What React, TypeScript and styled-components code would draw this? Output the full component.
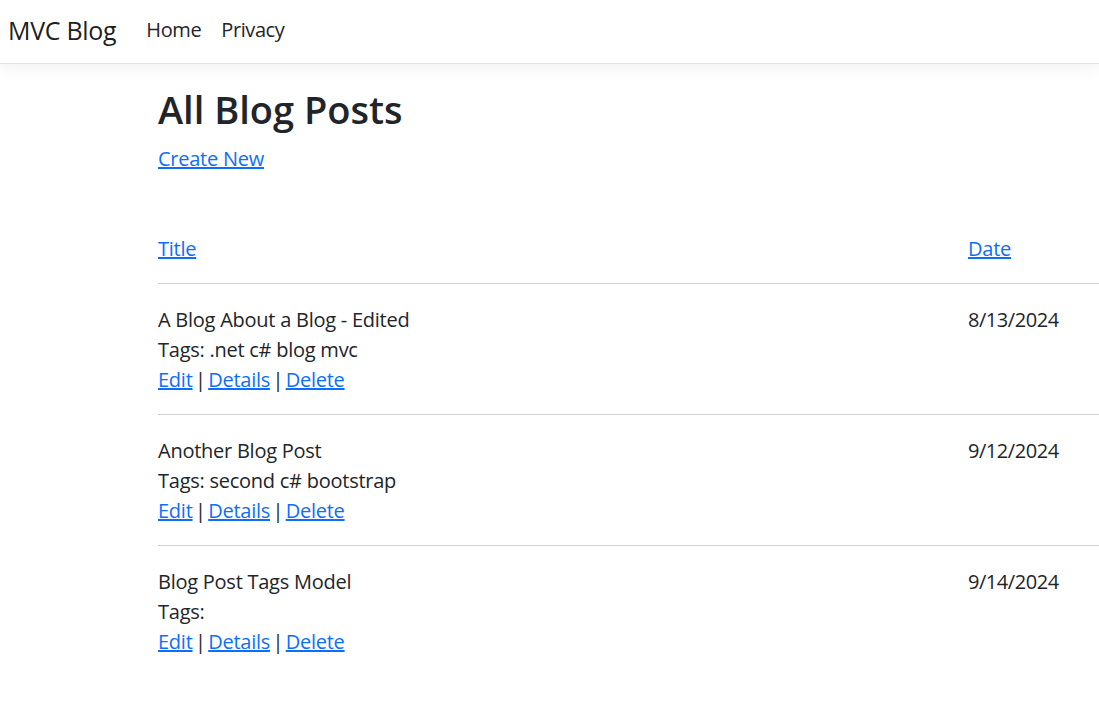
import React from "react";
import styled, { createGlobalStyle } from "styled-components";

const Global = createGlobalStyle`
  html, body { margin: 0; padding: 0; background: #fff; }
  body {
    font-family: "Open Sans", "Noto Sans", "Liberation Sans", sans-serif;
    font-size: 20px;
    line-height: 30px;
    letter-spacing: -0.25px;
    color: #212529;
  }
  * { box-sizing: border-box; }
`;

const Navbar = styled.header`
  height: 64px;
  border-bottom: 1px solid #dee2e6;
  box-shadow: 0 5px 15px rgba(0, 0, 0, 0.05);
  display: flex;
  align-items: center;
  padding: 0 0 3px 8px;
  background: #fff;
`;

const Brand = styled.a`
  font-size: 25px;
  color: rgba(0, 0, 0, 0.9);
  text-decoration: none;
  margin-right: 20px;
  line-height: 36px;
  letter-spacing: -0.3px;
`;

const NavList = styled.nav`
  display: flex;
`;

const NavLink = styled.a`
  color: #212529;
  text-decoration: none;
  padding: 0 10px;
  letter-spacing: -0.4px;
`;

const Main = styled.main`
  padding: 22px 0 0 158px;
`;

const Heading = styled.h1`
  font-size: 38px;
  line-height: 46px;
  font-weight: 600;
  letter-spacing: 0;
  margin: 0 0 12px;
`;

const Link = styled.a`
  color: #0d6efd;
  text-decoration: underline;
`;

const Para = styled.p`
  margin: 0;
`;

const Table = styled.table`
  width: 100%;
  border-collapse: collapse;
  margin-top: 39px;
`;

const Th = styled.th<{ $w?: number }>`
  text-align: left;
  font-weight: 400;
  padding: 21px 0 19px;
  border-bottom: 1px solid #cfcfcf;
  width: ${(p) => (p.$w ? `${p.$w}px` : "auto")};
`;

const Row = styled.tr`
  & + & td { border-top: 1px solid #cfcfcf; }
`;

const Td = styled.td`
  padding: 21px 0 19px;
  vertical-align: top;
`;

const DateCell = styled(Td)`
  letter-spacing: -0.45px;
`;

const Sep = styled.span`
  color: #212529;
  margin: 0 -2.5px;
`;

const posts = [
  { title: "A Blog About a Blog - Edited", tags: ".net c# blog mvc", date: "8/13/2024" },
  { title: "Another Blog Post", tags: "second c# bootstrap", date: "9/12/2024" },
  { title: "Blog Post Tags Model", tags: "", date: "9/14/2024" },
];

export default function App() {
  return (
    <>
      <Global />
      <Navbar>
        <Brand href="#">MVC Blog</Brand>
        <NavList>
          <NavLink href="#">Home</NavLink>
          <NavLink href="#">Privacy</NavLink>
        </NavList>
      </Navbar>
      <Main>
        <Heading>All Blog Posts</Heading>
        <Para>
          <Link href="#">Create New</Link>
        </Para>
        <Table>
          <thead>
            <tr>
              <Th $w={810}>
                <Link href="#">Title</Link>
              </Th>
              <Th>
                <Link href="#">Date</Link>
              </Th>
            </tr>
          </thead>
          <tbody>
            {posts.map((p) => (
              <Row key={p.title}>
                <Td>
                  <div>{p.title}</div>
                  <div>Tags: {p.tags}</div>
                  <div>
                    <Link href="#">Edit</Link> <Sep>|</Sep> <Link href="#">Details</Link>{" "}
                    <Sep>|</Sep> <Link href="#">Delete</Link>
                  </div>
                </Td>
                <DateCell>{p.date}</DateCell>
              </Row>
            ))}
          </tbody>
        </Table>
      </Main>
    </>
  );
}
